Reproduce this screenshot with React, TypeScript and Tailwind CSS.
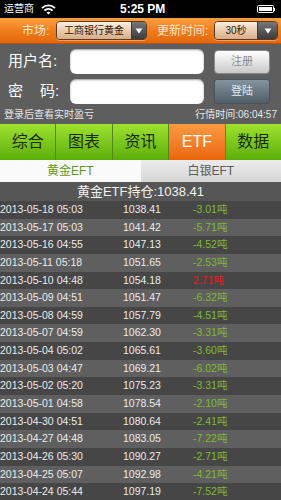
import React from "react";

const rows: [string, string, string][] = [
  ["2013-05-18 05:03", "1038.41", "-3.01吨"],
  ["2013-05-17 05:03", "1041.42", "-5.71吨"],
  ["2013-05-16 04:55", "1047.13", "-4.52吨"],
  ["2013-05-11 05:18", "1051.65", "-2.53吨"],
  ["2013-05-10 04:48", "1054.18", "2.71吨"],
  ["2013-05-09 04:51", "1051.47", "-6.32吨"],
  ["2013-05-08 04:59", "1057.79", "-4.51吨"],
  ["2013-05-07 04:59", "1062.30", "-3.31吨"],
  ["2013-05-04 05:02", "1065.61", "-3.60吨"],
  ["2013-05-03 04:47", "1069.21", "-6.02吨"],
  ["2013-05-02 05:20", "1075.23", "-3.31吨"],
  ["2013-05-01 04:58", "1078.54", "-2.10吨"],
  ["2013-04-30 04:51", "1080.64", "-2.41吨"],
  ["2013-04-27 04:48", "1083.05", "-7.22吨"],
  ["2013-04-26 05:30", "1090.27", "-2.71吨"],
  ["2013-04-25 05:07", "1092.98", "-4.21吨"],
  ["2013-04-24 05:44", "1097.19", "-7.52吨"],
];

const font = { fontFamily: '"Liberation Sans", "Noto Sans CJK SC", sans-serif' };

function Caret() {
  return (
    <svg width="8" height="6" viewBox="0 0 8 6">
      <path d="M0.5 0.5 L7.5 0.5 L4 5.5 Z" fill="#ffffff" />
    </svg>
  );
}

function Dropdown({ text, width, btn }: { text: string; width: string; btn: string }) {
  return (
    <div className={`flex h-[19px] ${width} overflow-hidden rounded-[4px] border border-[#5a3c22] shadow-[0_1px_0_rgba(255,255,255,0.35)]`}>
      <div className="flex flex-1 items-center justify-center bg-gradient-to-b from-[#fbeee0] to-[#d8ad87] text-[10px] text-[#2a1a0a]">
        {text}
      </div>
      <div className={`flex ${btn} items-center justify-center border-l border-[#3a3a3a] bg-gradient-to-b from-[#777777] to-[#3c3c3c]`}>
        <Caret />
      </div>
    </div>
  );
}

export default function App() {
  const tabs = ["综合", "图表", "资讯", "ETF", "数据"];
  return (
    <div className="w-[281px] h-[500px] overflow-hidden bg-[#5e5e5e]" style={font}>
      {/* status bar */}
      <div className="flex h-[18px] items-center bg-black px-[4px] text-white">
        <span className="text-[10px] leading-none">运营商</span>
        <svg className="ml-[7px]" width="15" height="11" viewBox="0 0 15 11">
          <path d="M1 4.2 A9 9 0 0 1 14 4.2" stroke="#fff" strokeWidth="1.8" fill="none" />
          <path d="M3.4 6.6 A5.6 5.6 0 0 1 11.6 6.6" stroke="#fff" strokeWidth="1.8" fill="none" />
          <path d="M7.5 10.5 L5.6 8.6 A2.7 2.7 0 0 1 9.4 8.6 Z" fill="#fff" />
        </svg>
        <span className="ml-[64px] text-[12px] font-bold leading-none">5:25 PM</span>
        <div className="ml-auto mr-[2px] flex items-center">
          <div className="flex h-[8px] w-[17px] items-center rounded-[1.5px] border border-white p-[1px]">
            <div className="h-full w-full bg-white" />
          </div>
          <div className="h-[3px] w-[1.5px] bg-white" />
        </div>
      </div>

      {/* orange bar */}
      <div className="flex h-[26px] items-center bg-gradient-to-b from-[#f9a040] via-[#f07d1c] to-[#e2670a] border-b border-[#b85208]">
        <span className="ml-[22px] w-[34px] text-[12px] text-[#fde6cc]">市场:</span>
        <Dropdown text="工商银行黄金" width="w-[91px]" btn="w-[15px]" />
        <span className="ml-[10px] w-[57px] text-[12px] text-[#fde6cc]">更新时间:</span>
        <Dropdown text="30秒" width="w-[64px]" btn="w-[20px]" />
      </div>

      {/* login area */}
      <div className="flex flex-col pt-[5px]">
        <div className="flex h-[25px] items-center">
          <span className="ml-[8px] w-[62px] text-[15px] text-white">用户名:</span>
          <div className="h-[25px] w-[134px] rounded-[6px] bg-white shadow-[inset_0_1px_2px_rgba(0,0,0,0.4)]" />
          <div className="ml-[10px] flex h-[24px] w-[56px] items-center justify-center rounded-[4px] border border-[#8a8a8a] bg-gradient-to-b from-[#ffffff] to-[#c9c9c9] text-[11px] text-[#8a8a8a]">
            注册
          </div>
        </div>
        <div className="mt-[5px] flex h-[25px] items-center">
          <span className="ml-[8px] flex w-[62px] text-[15px] text-white">
            <span>密</span>
            <span className="ml-[17px]">码</span>
            <span>:</span>
          </span>
          <div className="h-[25px] w-[134px] rounded-[6px] bg-white shadow-[inset_0_1px_2px_rgba(0,0,0,0.4)]" />
          <div className="ml-[10px] flex h-[25px] w-[56px] items-center justify-center rounded-[3px] border border-[#4a545c] bg-gradient-to-b from-[#8394a0] to-[#505d67] text-[11px] text-[#e6ecf0]">
            登陆
          </div>
        </div>
        <div className="mt-[2px] flex h-[16px] items-center justify-between px-[4px] text-[10px] text-[#e6e6e6]">
          <span>登录后查看实时盈亏</span>
          <span>行情时间:06:04:57</span>
        </div>
      </div>

      {/* green tabs */}
      <div className="mt-[2px] flex h-[36px]">
        {tabs.map((t, i) => (
          <div
            key={t}
            className={
              i === 3
                ? "flex flex-1 items-center justify-center bg-gradient-to-b from-[#fb9a40] to-[#ea6608] text-[16px] text-white border-r border-[#c45a10]"
                : `flex flex-1 items-center justify-center bg-gradient-to-b from-[#9ee22e] to-[#5cae08] text-[16px] text-[#1a2a05] ${i < 4 ? "border-r border-[#4f8a18]" : ""}`
            }
          >
            {t}
          </div>
        ))}
      </div>

      {/* sub tabs */}
      <div className="flex h-[22px] text-[12px]">
        <div className="flex flex-1 items-center justify-center bg-[#fafafa] text-[#5d9a26]">黄金EFT</div>
        <div className="flex flex-1 items-center justify-center bg-gradient-to-b from-[#ececec] to-[#d6d6d6] text-[#5a5a5a]">白银EFT</div>
      </div>

      {/* header */}
      <div className="flex h-[19px] items-center justify-center bg-[#565656] text-[13px] text-[#f2f2f2]">
        黄金ETF持仓:1038.41
      </div>

      {/* rows */}
      <div className="flex flex-col">
        {rows.map(([d, v, c], i) => (
          <div
            key={d}
            className={`flex h-[17.65px] items-center text-[10.5px] ${i % 2 === 0 ? "bg-[#464646]" : "bg-[#5f5f5f]"}`}
          >
            <span className="w-[123px] text-[#ececec]">{d}</span>
            <span className="w-[70px] text-[#ececec]">{v}</span>
            <span className={c.startsWith("-") ? "text-[#7cbd2a]" : "text-[#e2231a]"}>{c}</span>
          </div>
        ))}
        <div className="h-[4px] bg-[#5f5f5f]" />
      </div>
    </div>
  );
}
